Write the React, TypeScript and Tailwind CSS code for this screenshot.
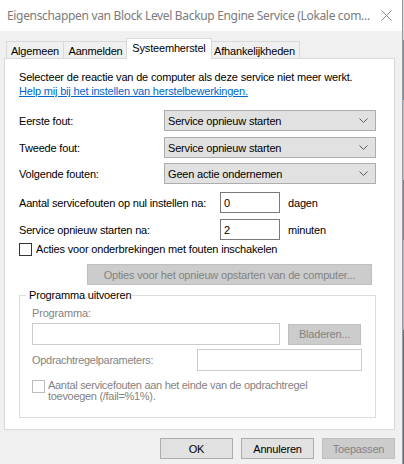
import React from "react";

// small dropdown chevron used by the combo boxes
function Chevron() {
  return (
    <svg width="9" height="5" viewBox="0 0 9 5" className="shrink-0">
      <polyline points="0.5,0.5 4.5,4.5 8.5,0.5" fill="none" stroke="#5a5a5a" strokeWidth="1" />
    </svg>
  );
}

function Combo({ value }: { value: string }) {
  return (
    <div className="w-[212px] h-[21px] flex items-center justify-between pl-[3px] pr-[7px] bg-[#e1e1e1] border border-[#adadad]">
      <span>{value}</span>
      <Chevron />
    </div>
  );
}

function Row({ label, value }: { label: string; value: string }) {
  return (
    <div className="flex items-center h-[21px]">
      <span className="w-[145px]">{label}</span>
      <Combo value={value} />
    </div>
  );
}

function SpinRow({ label, value, unit }: { label: string; value: string; unit: string }) {
  return (
    <div className="flex items-center h-[21px]">
      <span className="w-[201px]">{label}</span>
      <div className="w-[60px] h-[21px] flex items-center px-[3px] bg-white border border-[#7a7a7a]">{value}</div>
      <span className="ml-[8px]">{unit}</span>
    </div>
  );
}

function Button({ label, disabled }: { label: string; disabled?: boolean }) {
  return (
    <div
      className={
        disabled
          ? "w-[73px] h-[21px] flex items-center justify-center bg-[#cccccc] border border-[#bfbfbf] text-[#838383]"
          : "w-[73px] h-[21px] flex items-center justify-center bg-[#e1e1e1] border border-[#adadad]"
      }
    >
      {label}
    </div>
  );
}

const tabs = [
  { label: "Algemeen", w: "w-[58px]" },
  { label: "Aanmelden", w: "w-[64px]" },
  { label: "Systeemherstel", w: "w-[86px]", active: true },
  { label: "Afhankelijkheden", w: "w-[90px]" },
];

export default function App() {
  return (
    <div className="w-[404px] h-[464px] flex overflow-hidden bg-[#f0f0f0] text-black text-[11px] leading-[14px] tracking-[-0.18px] font-['Liberation_Sans',Arial,sans-serif]">
      {/* dialog window */}
      <div className="w-[403px] flex flex-col border-r border-[#9a9a9a]">
        {/* title bar */}
        <div className="h-[31px] shrink-0 flex items-center justify-between bg-white pl-[7px] pr-[10px]">
          <span className="text-[12px] text-[#7b7b7b] font-['Noto_Sans',sans-serif] tracking-[-0.33px] whitespace-nowrap">
            Eigenschappen van Block Level Backup Engine Service (Lokale com...
          </span>
          <svg width="11" height="11" viewBox="0 0 11 11" className="shrink-0">
            <path d="M0.5 0.5 L10.5 10.5 M10.5 0.5 L0.5 10.5" stroke="#8a8a8a" strokeWidth="1" />
          </svg>
        </div>

        <div className="flex-1 flex flex-col pl-[4px]">
          {/* tab strip */}
          <div className="h-[27px] flex items-end pl-[2px]">
            {tabs.map((t) =>
              t.active ? (
                <div
                  key={t.label}
                  className={`${t.w} h-[21px] -mb-px -mx-[2px] relative z-10 flex items-center justify-center bg-white border border-b-0 border-[#d9d9d9] pb-[2px]`}
                >
                  {t.label}
                </div>
              ) : (
                <div
                  key={t.label}
                  className={`${t.w} h-[17px] flex items-center justify-center border border-b-0 border-l-0 first:border-l border-[#d9d9d9] pt-px`}
                >
                  {t.label}
                </div>
              )
            )}
          </div>

          {/* Systeemherstel page */}
          <div className="w-[391px] h-[372px] flex flex-col bg-white border border-[#d9d9d9] pl-[14px] pt-[11px]">
            <p>Selecteer de reactie van de computer als deze service niet meer werkt.</p>
            <p className="text-[#0066cc] underline">Help mij bij het instellen van herstelbewerkingen.</p>

            <div className="mt-[12px]">
              <Row label="Eerste fout:" value="Service opnieuw starten" />
            </div>
            <div className="mt-[6px]">
              <Row label="Tweede fout:" value="Service opnieuw starten" />
            </div>
            <div className="mt-[5px]">
              <Row label="Volgende fouten:" value="Geen actie ondernemen" />
            </div>

            <div className="mt-[8px]">
              <SpinRow label="Aantal servicefouten op nul instellen na:" value="0" unit="dagen" />
            </div>
            <div className="mt-[6px]">
              <SpinRow label="Service opnieuw starten na:" value="2" unit="minuten" />
            </div>

            <div className="mt-[2px] flex items-center gap-[4px] h-[14px]">
              <div className="w-[13px] h-[13px] bg-white border border-[#333333]" />
              <span>Acties voor onderbrekingen met fouten inschakelen</span>
            </div>

            <div className="mt-[8px] ml-[68px] w-[285px] h-[21px] flex items-center justify-center bg-[#cccccc] border border-[#bfbfbf] text-[#838383]">
              Opties voor het opnieuw opstarten van de computer...
            </div>

            <fieldset className="mt-[4px] w-[357px] border border-[#dcdcdc] pl-[12px] pb-[15px]">
              <legend className="-ml-[6px] pl-[3px] pr-[1px] leading-[13px]">Programma uitvoeren</legend>
              <div className="mt-[5px] text-[#838383] leading-[13px]">Programma:</div>
              <div className="mt-[3px] flex items-center">
                <div className="w-[248px] h-[22px] bg-white border border-[#cccccc]" />
                <div className="ml-[8px] w-[73px] h-[21px] flex items-center justify-center bg-[#cccccc] border border-[#bfbfbf] text-[#838383]">
                  Bladeren...
                </div>
              </div>
              <div className="mt-[4px] flex items-center">
                <span className="w-[165px] text-[#838383] tracking-[-0.3px]">Opdrachtregelparameters:</span>
                <div className="w-[165px] h-[22px] bg-white border border-[#cccccc]" />
              </div>
              <div className="mt-[9px] flex items-start gap-[3px]">
                <div className="w-[13px] h-[13px] shrink-0 bg-white border border-[#bcbcbc]" />
                <span className="text-[#838383] leading-[11px] tracking-[-0.3px]">
                  Aantal servicefouten aan het einde van de opdrachtregel
                  <br />
                  toevoegen (/fail=%1%).
                </span>
              </div>
            </fieldset>
          </div>

          {/* dialog buttons */}
          <div className="w-[391px] mt-[8px] flex justify-end gap-[8px]">
            <Button label="OK" />
            <Button label="Annuleren" />
            <Button label="Toepassen" disabled />
          </div>
        </div>
      </div>

      {/* sliver of the desktop behind the window */}
      <div className="w-px flex flex-col">
        <div className="h-[40px] bg-[#d8d8e8]" />
        <div className="h-[60px] bg-[#7a8aa8]" />
        <div className="h-[80px] bg-[#c8b8c0]" />
        <div className="h-[60px] bg-[#8a7a96]" />
        <div className="h-[90px] bg-[#b0b4c8]" />
        <div className="flex-1 bg-[#6a6a80]" />
      </div>
    </div>
  );
}
